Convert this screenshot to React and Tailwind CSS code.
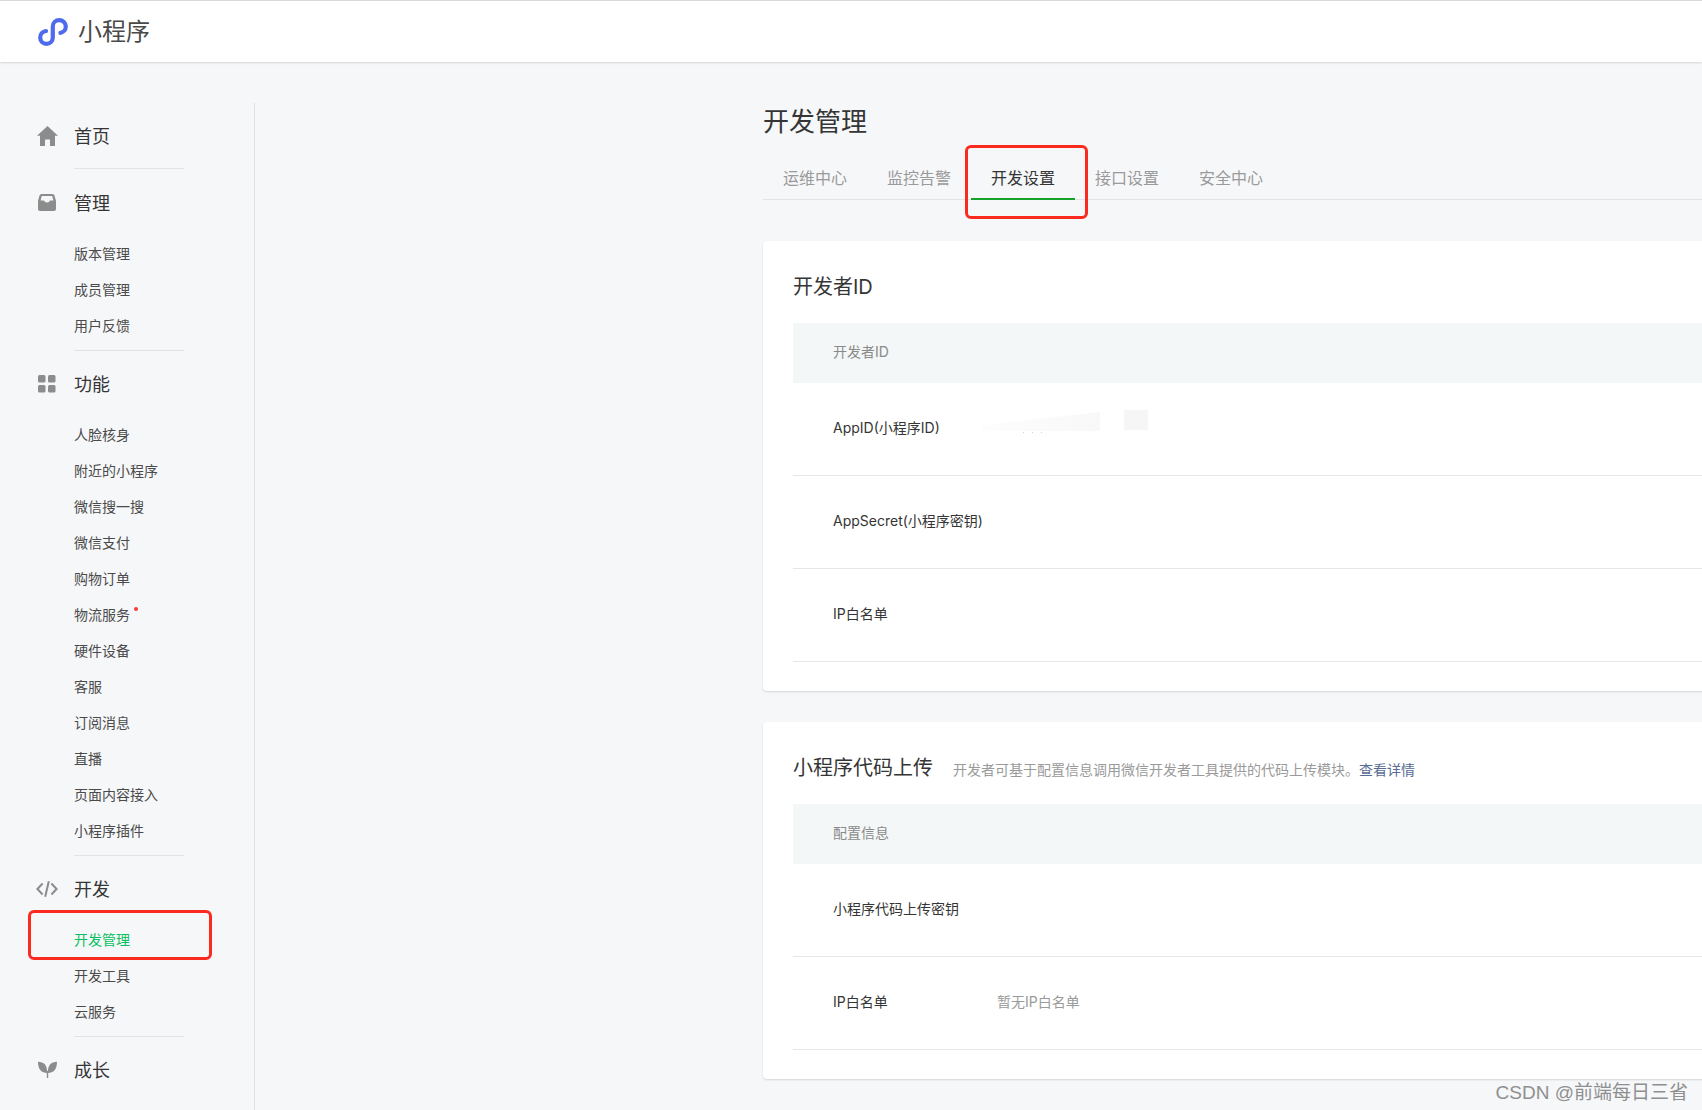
import React from 'react';

const gray = '#8c8c8c';

// 小程序 logo
const Logo = () => (
  <svg width="31" height="28" viewBox="0 0 31 28" fill="none" className="shrink-0">
    <path
      d="M8 13 C4.5 13.5 2.2 16.2 2.2 19.5 C2.2 23 5 25.8 8.5 25.8 C12 25.8 14.8 23 14.8 19.5 V8.5 C14.8 5 17.6 2.2 21.2 2.2 C24.8 2.2 27.8 5 27.8 8.5 C27.8 11.8 25.4 14.4 22.4 14.8"
      stroke="#4f6bed"
      strokeWidth="4.2"
      strokeLinecap="round"
    />
  </svg>
);

const HomeIcon = () => (
  <svg width="21" height="20" viewBox="0 0 21 20" fill={gray}>
    <path d="M10.5 0 L21 9.8 L18 9.8 L18 20 L13 20 L13 13.5 L8 13.5 L8 20 L3 20 L3 9.8 L0 9.8 Z" />
  </svg>
);

const InboxIcon = () => (
  <svg width="18" height="17" viewBox="0 0 18 17" fill={gray}>
    <path
      fillRule="evenodd"
      d="M3.5 0 H14.5 Q16 0 16.5 1.5 L18 7 V15 Q18 17 16 17 H2 Q0 17 0 15 V7 L1.5 1.5 Q2 0 3.5 0 Z M3.8 2 L2.6 6.4 H6 Q6.5 8.4 9 8.4 Q11.5 8.4 12 6.4 H15.4 L14.2 2 Z"
    />
  </svg>
);

const GridIcon = () => (
  <svg width="18" height="18" viewBox="0 0 18 18" fill={gray}>
    <rect x="0" y="0" width="7.5" height="7.5" rx="1.5" />
    <rect x="10" y="0" width="7.5" height="7.5" rx="1.5" />
    <rect x="0" y="10" width="7.5" height="7.5" rx="1.5" />
    <rect x="10" y="10" width="7.5" height="7.5" rx="1.5" />
  </svg>
);

const CodeIcon = () => (
  <svg width="22" height="16" viewBox="0 0 22 16" fill="none" stroke={gray} strokeWidth="2">
    <path d="M6.6 2.5 L1.4 8 L6.6 13.5" />
    <path d="M15.4 2.5 L20.6 8 L15.4 13.5" />
    <path d="M12.8 0.3 L9.2 15.7" />
  </svg>
);

const SproutIcon = () => (
  <svg width="19" height="17" viewBox="0 0 19 17" fill={gray}>
    <path d="M0 0.8 C6 0.8 9.2 4 9.2 12 C3.5 12 0 8.5 0 0.8 Z" />
    <path d="M19 0.8 C13 0.8 9.8 4 9.8 12 C15.5 12 19 8.5 19 0.8 Z" />
    <rect x="8.8" y="10" width="1.4" height="7" />
  </svg>
);

const RedBox = ({ className }) => (
  <div className={`absolute rounded-[6px] border-[3px] border-[#fb2a1f] ${className}`} />
);

const Divider = () => <div className="ml-[74px] w-[110px] h-px bg-[#e1e3e6]" />;

const NavHead = ({ icon, label, tall }) => (
  <div className={`flex items-center ${tall ? 'h-[66px]' : 'h-[65px]'}`}>
    <div className="w-[74px] pl-[34px] pr-[14px] flex justify-center shrink-0">{icon}</div>
    <span className="relative top-px text-[18px] text-[#353535]">{label}</span>
  </div>
);

const NavItem = ({ label, active, dot }) => (
  <div
    className={`relative h-[36px] flex items-center pl-[74px] text-[14px] ${
      active ? 'text-[#07c160]' : 'text-[#4a4a4a]'
    }`}
  >
    {label}
    {dot && <span className="ml-[4px] mb-[11px] w-[4px] h-[4px] rounded-full bg-[#fa3a3a]" />}
    {active && <RedBox className="left-[28px] top-[-11px] w-[184px] h-[50px]" />}
  </div>
);

const Sidebar = () => (
  <aside className="w-[255px] shrink-0 border-r border-[#e1e3e6]">
    <NavHead icon={<HomeIcon />} label="首页" />
    <Divider />
    <NavHead icon={<InboxIcon />} label="管理" tall />
    {['版本管理', '成员管理', '用户反馈'].map((t) => (
      <NavItem key={t} label={t} />
    ))}
    <div className="h-[7px]" />
    <Divider />
    <NavHead icon={<GridIcon />} label="功能" />
    {[
      '人脸核身',
      '附近的小程序',
      '微信搜一搜',
      '微信支付',
      '购物订单',
      '物流服务',
      '硬件设备',
      '客服',
      '订阅消息',
      '直播',
      '页面内容接入',
      '小程序插件',
    ].map((t) => (
      <NavItem key={t} label={t} dot={t === '物流服务'} />
    ))}
    <div className="h-[7px]" />
    <Divider />
    <NavHead icon={<CodeIcon />} label="开发" />
    <NavItem label="开发管理" active />
    <NavItem label="开发工具" />
    <NavItem label="云服务" />
    <div className="h-[7px]" />
    <Divider />
    <NavHead icon={<SproutIcon />} label="成长" />
  </aside>
);

const Tabs = () => {
  const tabs = ['运维中心', '监控告警', '开发设置', '接口设置', '安全中心'];
  return (
    <div className="mt-[15px] flex h-[46px] border-b border-[#e1e3e6]">
      {tabs.map((t) => {
        const active = t === '开发设置';
        return (
          <div
            key={t}
            className={`relative w-[104px] h-[46px] flex items-center justify-center text-[16px] ${
              active ? 'pt-[4px] text-[#353535] border-b-2 border-[#16a32a]' : 'pt-[2px] text-[#9a9a9a]'
            }`}
          >
            {t}
            {active && <RedBox className="left-[-6px] top-[-9px] w-[123px] h-[74px]" />}
          </div>
        );
      })}
    </div>
  );
};

const TableHead = ({ label }) => (
  <div className="h-[60px] flex items-center pl-[40px] pb-[3px] bg-[#f4f7f7] text-[14px] text-[#8a8a8a]">{label}</div>
);

const Row = ({ label, children }) => (
  <div className="h-[93px] flex items-center pl-[40px] pb-[3px] border-b border-[#e4e6e8] text-[14px] text-[#353535]">
    <div className="w-[164px] shrink-0">{label}</div>
    {children}
  </div>
);

const Card = ({ title, extra, children }) => (
  <section className="bg-white rounded-[4px] shadow-[0_1px_2px_rgba(0,0,0,0.14)] -mr-2 pl-[30px] pt-[25px] pb-[29px]">
    <div className="flex items-center h-[41px] mb-[16px]">
      <h3 className="text-[20px] text-[#353535] font-normal">{title}</h3>
      {extra}
    </div>
    {children}
  </section>
);

const Main = () => (
  <main className="flex-1 min-w-0 pl-[508px]">
    <h2 className="h-[36px] pt-[2px] leading-[34px] text-[26px] text-[#353535] font-normal">开发管理</h2>
    <Tabs />
    <div className="mt-[41px]">
      <Card title="开发者ID">
        <TableHead label="开发者ID" />
        <Row label="AppID(小程序ID)">
          <div className="relative flex items-start -ml-[15px] -mt-[12px]">
            <div className="w-[118px] h-[19px] bg-linear-to-r from-[#fdfdfd] to-[#f8f8f8] [clip-path:polygon(0_70%,100%_0,100%_100%,0_100%)]" />
            <div className="ml-[24px] -mt-[2px] w-[24px] h-[20px] bg-[#f6f6f6]" />
            {/* 打码后残留的小点 */}
            <div className="absolute left-[41px] top-[20px] flex gap-[8px]">
              <span className="w-px h-px bg-[#cfcfcf]" />
              <span className="w-px h-px bg-[#cfcfcf]" />
              <span className="w-px h-px bg-[#cfcfcf]" />
            </div>
          </div>
        </Row>
        <Row label="AppSecret(小程序密钥)" />
        <Row label="IP白名单" />
      </Card>
    </div>
    <div className="mt-[31px]">
      <Card
        title="小程序代码上传"
        extra={
          <p className="ml-[20px] mt-[3px] text-[14px] text-[#9a9a9a]">
            开发者可基于配置信息调用微信开发者工具提供的代码上传模块。
            <span className="text-[#576b95]">查看详情</span>
          </p>
        }
      >
        <TableHead label="配置信息" />
        <Row label="小程序代码上传密钥" />
        <Row label="IP白名单">
          <span className="text-[#9a9a9a]">暂无IP白名单</span>
        </Row>
      </Card>
    </div>
  </main>
);

export default function App() {
  return (
    <div className="relative h-screen overflow-hidden bg-[#f6f7f9] font-['Inter','Noto_Sans_CJK_SC',sans-serif]">
      <header className="h-[62px] flex items-center pl-[38px] bg-white border-t border-[#d9d9d9] shadow-[0_1px_2px_rgba(0,0,0,0.14)]">
        <Logo />
        <span className="ml-[9px] text-[24px] text-[#4a4a4a]">小程序</span>
      </header>
      <div className="flex pt-[41px] h-[calc(100vh-62px)]">
        <Sidebar />
        <Main />
      </div>
      {/* CSDN 水印 */}
      <div className="absolute right-[14px] bottom-[5px] text-[19px] leading-[24px] text-[#8f8f8f] font-['Liberation_Sans','Noto_Sans_CJK_SC',sans-serif]">
        CSDN @前端每日三省
      </div>
    </div>
  );
}
